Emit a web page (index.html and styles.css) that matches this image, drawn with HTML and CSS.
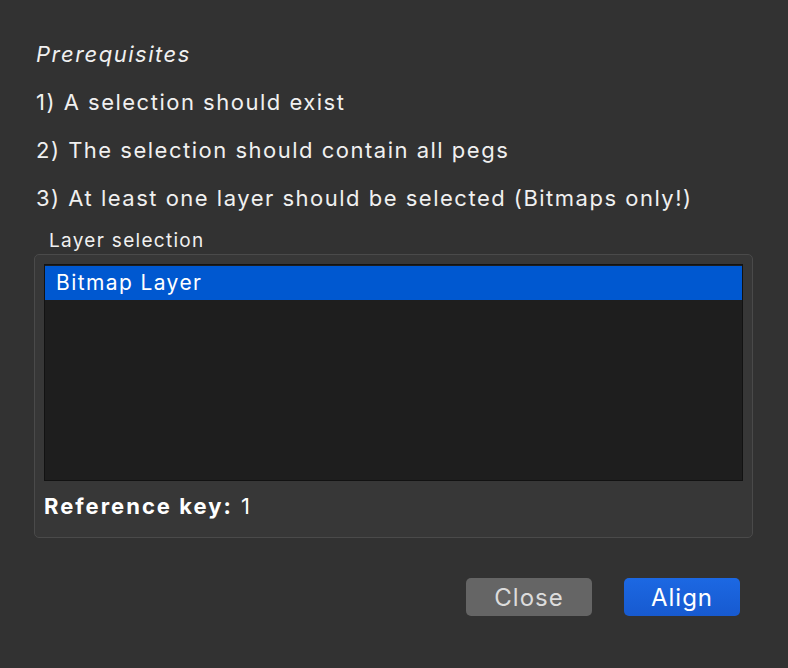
FILE: index.html
```html
<!DOCTYPE html>
<html>
<head>
<meta charset="utf-8">
<link rel="stylesheet" href="styles.css">
</head>
<body>
<div class="dialog">
  <div class="prereq">
    <p class="line title">Prerequisites</p>
    <p class="line">1) A selection should exist</p>
    <p class="line">2) The selection should contain all pegs</p>
    <p class="line">3) At least one layer should be selected (Bitmaps only!)</p>
  </div>
  <div class="group-label">Layer selection</div>
  <div class="group">
    <div class="list">
      <div class="item selected">Bitmap Layer</div>
    </div>
    <div class="refkey"><b>Reference key:</b> 1</div>
  </div>
  <div class="buttons">
    <button class="btn close">Close</button>
    <button class="btn align">Align</button>
  </div>
</div>
</body>
</html>
```
FILE: styles.css
```css
html, body {
  margin: 0;
  padding: 0;
  background: #323232;
  height: 100%;
}
body {
  font-family: Inter, "Liberation Sans", Arial, sans-serif;
  color: #f0f0f0;
  -webkit-font-smoothing: antialiased;
}
.dialog {
  padding: 30px 35px 0 34px;
}
.prereq {
  padding-left: 2px;
}
.line {
  margin: 0;
  font-size: 22px;
  line-height: 48px;
  letter-spacing: 1.5px;
}
.title {
  font-style: italic;
}
.group-label {
  font-size: 19px;
  line-height: 22px;
  letter-spacing: 1.3px;
  margin: 8px 0 0 15px;
}
.group {
  margin-top: 2px;
  background: #373737;
  border: 1px solid #4a4a4a;
  border-radius: 5px;
  padding: 9px 9px 18px 9px;
}
.list {
  height: 214px;
  background: #1e1e1e;
  border: 1px solid #121212;
  padding-top: 1px;
}
.item {
  height: 34px;
  line-height: 34px;
  font-size: 21px;
  letter-spacing: 1.4px;
  padding-left: 11px;
  color: #fff;
}
.selected {
  background: #0058d0;
}
.refkey {
  margin-top: 12px;
  font-size: 22px;
  line-height: 26px;
  letter-spacing: 2px;
  color: #fff;
}
.refkey b {
  font-weight: 700;
}
.buttons {
  display: flex;
  justify-content: flex-end;
  gap: 32px;
  margin-top: 40px;
  padding-right: 13px;
}
.btn {
  height: 38px;
  border: none;
  border-radius: 5px;
  font-family: inherit;
  font-size: 24px;
  letter-spacing: 1px;
  padding: 0;
}
.close {
  width: 126px;
  background: #656565;
  color: #dcdcdc;
}
.align {
  width: 116px;
  background: linear-gradient(#1c68e3, #175ad0);
  color: #fff;
}
```
